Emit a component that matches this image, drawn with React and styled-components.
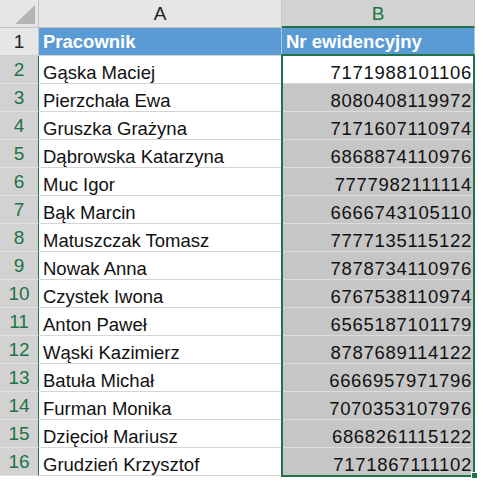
import React from "react";
import styled, { css, createGlobalStyle } from "styled-components";

const GREEN = "#217346";

const GlobalStyle = createGlobalStyle`
  html, body {
    margin: 0;
    padding: 0;
    background: #ffffff;
  }
  body {
    font-family: "Liberation Sans", Arial, sans-serif;
  }
`;

const rows = [
  ["Gąska Maciej", "7171988101106"],
  ["Pierzchała Ewa", "8080408119972"],
  ["Gruszka Grażyna", "7171607110974"],
  ["Dąbrowska Katarzyna", "6868874110976"],
  ["Muc Igor", "7777982111114"],
  ["Bąk Marcin", "6666743105110"],
  ["Matuszczak Tomasz", "7777135115122"],
  ["Nowak Anna", "7878734110976"],
  ["Czystek Iwona", "6767538110974"],
  ["Anton Paweł", "6565187101179"],
  ["Wąski Kazimierz", "8787689114122"],
  ["Batuła Michał", "6666957971796"],
  ["Furman Monika", "7070353107976"],
  ["Dzięcioł Mariusz", "6868261115122"],
  ["Grudzień Krzysztof", "7171867111102"],
];

// every item sits in a fixed grid slot, so the selection frame can overlap cells
const slot = css`
  grid-row: ${(p) => p.$row};
  grid-column: ${(p) => p.$col};
`;

const Sheet = styled.div`
  display: grid;
  grid-template-columns: 39px 243px 193px 1fr;
  grid-auto-rows: 28px;
  width: 483px;
  height: 484px;
  overflow: hidden;
  background: #ffffff;
  font-size: 18.5px;
  color: #111;
`;

const Corner = styled.div`
  ${slot};
  box-sizing: border-box;
  background: #e6e6e6;
  border-right: 1px solid #c4c4c4;
  border-bottom: 1px solid #c4c4c4;
  display: flex;
  align-items: flex-end;
  justify-content: flex-end;
  padding: 0 3px 3px 0;
`;

const ColHeader = styled.div`
  ${slot};
  box-sizing: border-box;
  display: flex;
  align-items: center;
  justify-content: center;
  font-size: 19px;
  background: ${(p) => (p.$selected ? "#d2d2d2" : "#e6e6e6")};
  color: ${(p) => (p.$selected ? GREEN : "#222")};
  border-right: 1px solid #c4c4c4;
  border-bottom: ${(p) => (p.$selected ? `2px solid ${GREEN}` : "1px solid #c4c4c4")};
  padding-top: 1px;
`;

const RowHeader = styled.div`
  ${slot};
  box-sizing: border-box;
  display: flex;
  align-items: center;
  justify-content: center;
  padding-top: 1px;
  font-size: 19px;
  background: ${(p) => (p.$selected ? "#d2d2d2" : "#e6e6e6")};
  color: ${(p) => (p.$selected ? GREEN : "#222")};
  border-right: 1px solid ${(p) => (p.$selected ? GREEN : "#c4c4c4")};
  border-bottom: 1px solid ${(p) => (p.$selected ? "#e2e2e2" : "#d0d0d0")};
`;

const Cell = styled.div`
  ${slot};
  box-sizing: border-box;
  display: flex;
  align-items: flex-end;
  line-height: 1;
  white-space: nowrap;
  padding-left: 4px;
  padding-bottom: 1px;
  justify-content: ${(p) => (p.$num ? "flex-end" : "flex-start")};
  letter-spacing: ${(p) => (p.$num ? "0.7px" : "0")};
  padding-right: ${(p) => (p.$num ? "2px" : "4px")};
  background: ${(p) => (p.$shaded ? "#c6c6c6" : "#ffffff")};
  border-right: 1px solid ${(p) => (p.$shaded ? "#dcdcdc" : "#d4d4d4")};
  border-bottom: 1px solid ${(p) => (p.$shaded ? "#dcdcdc" : "#d4d4d4")};
`;

const TitleCell = styled.div`
  ${slot};
  box-sizing: border-box;
  display: flex;
  align-items: center;
  line-height: 1;
  padding: 1px 4px 0;
  background: #5b9bd5;
  color: #ffffff;
  font-weight: bold;
  border-right: 1px solid #a9c8e8;
  border-bottom: 1px solid #d4d4d4;
`;

const Selection = styled.div`
  grid-column: 3;
  grid-row: 3 / 18;
  margin: -2px 0 -1px -1px;
  border: 2px solid ${GREEN};
  position: relative;
  z-index: 2;
  pointer-events: none;
`;

const FillHandle = styled.div`
  position: absolute;
  right: -4px;
  bottom: -3px;
  width: 5px;
  height: 5px;
  background: ${GREEN};
  box-shadow: 0 0 0 1px #ffffff;
`;

const CornerTriangle = () => (
  <svg width="20" height="19" viewBox="0 0 20 19">
    <polygon points="20,0 20,19 0,19" fill="#b5b5b5" />
  </svg>
);

const App = () => {
  return (
    <>
      <GlobalStyle />
      <Sheet>
        <Corner $row={1} $col={1}>
          <CornerTriangle />
        </Corner>
        <ColHeader $row={1} $col={2}>
          A
        </ColHeader>
        <ColHeader $row={1} $col={3} $selected>
          B
        </ColHeader>

        <RowHeader $row={2} $col={1}>
          1
        </RowHeader>
        <TitleCell $row={2} $col={2}>
          Pracownik
        </TitleCell>
        <TitleCell $row={2} $col={3}>
          Nr ewidencyjny
        </TitleCell>

        {rows.map(([name, num], i) => (
          <React.Fragment key={num}>
            <RowHeader $row={i + 3} $col={1} $selected>
              {i + 2}
            </RowHeader>
            <Cell $row={i + 3} $col={2}>
              {name}
            </Cell>
            <Cell $row={i + 3} $col={3} $num $shaded={i > 0}>
              {num}
            </Cell>
          </React.Fragment>
        ))}

        <Selection>
          <FillHandle />
        </Selection>
      </Sheet>
    </>
  );
};

export default App;
